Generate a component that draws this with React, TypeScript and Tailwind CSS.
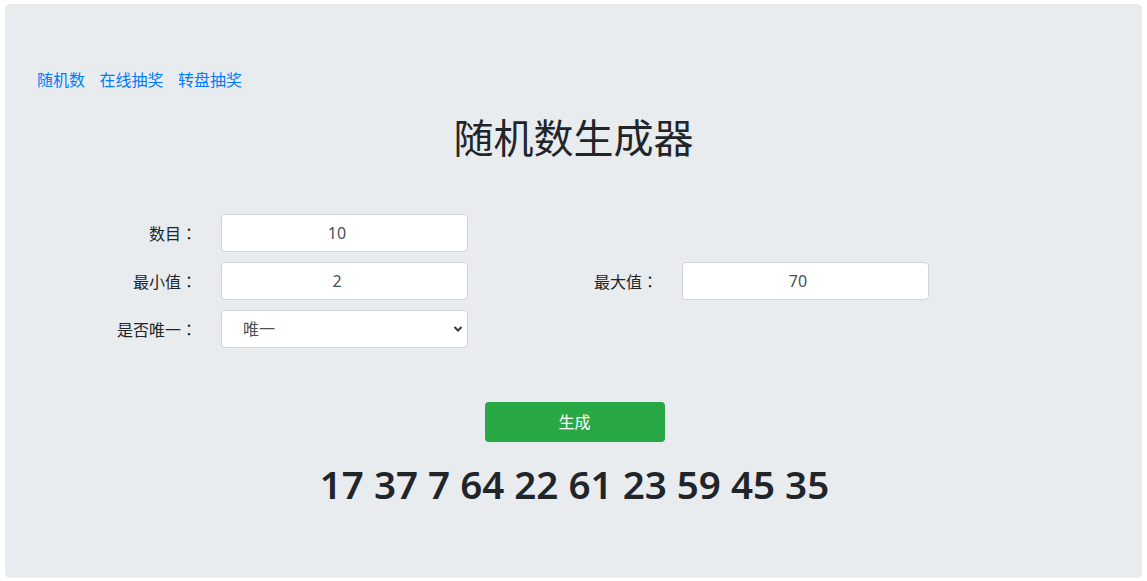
import React from "react";

const font = { fontFamily: '"Noto Sans", "Noto Sans CJK SC", sans-serif' };

function Label({ text }: { text: string }) {
  return (
    <div
      className="w-[184px] shrink-0 pr-[9px] pl-[15px] text-right text-[16px] text-[#212529] leading-[38px]"
      style={{ fontFamily: '"Noto Sans CJK SC", sans-serif' }}
    >
      {text}
      <span style={{ fontFamily: '"Noto Sans CJK TC", sans-serif' }}>：</span>
    </div>
  );
}

function Field({ value }: { value: string }) {
  return (
    <div className="w-[277px] shrink-0 px-[15px]">
      <input
        readOnly
        value={value}
        className="block h-[38px] w-full rounded-[4px] border border-[#ced4da] bg-white pl-[12px] pr-[27px] text-center text-[16px] text-[#495057] outline-none"
      />
    </div>
  );
}

export default function App() {
  return (
    <div className="min-h-[581px] bg-white pt-[4px] px-[5px]" style={font}>
      <div className="rounded-[5px] bg-[#e9ecef] px-[32px] pt-[64px] pb-[70px]">
        <div className="flex gap-[14.5px] text-[16px] leading-[24px] text-[#007bff]">
          <a href="#">随机数</a>
          <a href="#">在线抽奖</a>
          <a href="#">转盘抽奖</a>
        </div>
        <h1 className="mt-[22px] text-center text-[40px] leading-[48px] font-normal text-[#212529]">
          随机数生成器
        </h1>
        <div className="mt-[52px] -mx-[15px] flex flex-col gap-[10px]">
          <div className="flex">
            <Label text="数目" />
            <Field value="10" />
          </div>
          <div className="flex">
            <Label text="最小值" />
            <Field value="2" />
            <Label text="最大值" />
            <Field value="70" />
          </div>
          <div className="flex">
            <Label text="是否唯一" />
            <div className="w-[277px] shrink-0 px-[15px]">
              <div className="relative">
                <select className="block h-[38px] w-full appearance-none rounded-[4px] border border-[#ced4da] bg-white pl-[21px] text-[16px] text-[#495057] outline-none">
                  <option>唯一</option>
                  <option>不唯一</option>
                </select>
                <svg
                  className="pointer-events-none absolute right-[5px] top-[15px]"
                  width="10"
                  height="8"
                  viewBox="0 0 10 8"
                >
                  <path d="M1.5 2 L5 5.5 L8.5 2" fill="none" stroke="#343a40" strokeWidth="2" />
                </svg>
              </div>
            </div>
          </div>
        </div>
        <div className="mt-[54px] flex justify-center">
          <button className="ml-[2px] h-[40px] w-[180px] rounded-[4px] bg-[#28a745] text-[16px] text-white">
            生成
          </button>
        </div>
        <div className="mt-[18px] ml-[2px] text-center text-[38.6px] leading-[48px] font-semibold text-[#212529]">
          17 37 7 64 22 61 23 59 45 35
        </div>
      </div>
    </div>
  );
}
